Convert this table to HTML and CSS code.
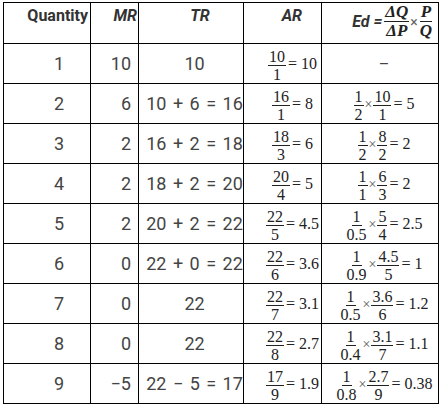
FILE: index.html
```html
<!DOCTYPE html>
<html>
<head>
<meta charset="utf-8">
<link rel="stylesheet" href="styles.css">
</head>
<body>
<table class="tbl">
  <colgroup>
    <col class="c1"><col class="c2"><col class="c3"><col class="c4"><col class="c5">
  </colgroup>
  <tr class="head">
    <th class="h-q">Quantity</th>
    <th class="h-mr">MR</th>
    <th class="h-tr">TR</th>
    <th class="h-ar">AR</th>
    <th class="h-ed"><span class="ed-lbl">Ed =</span><span class="frac big"><span class="num">ΔQ</span><span class="den">ΔP</span></span><span class="times">×</span><span class="frac big"><span class="num">P</span><span class="den">Q</span></span></th>
  </tr>
  <tr>
    <td class="q">1</td><td class="mr">10</td><td class="tr">10</td>
    <td class="ar"><span class="eq"><span class="frac"><span class="num">10</span><span class="den">1</span></span><span class="rhs">= 10</span></span></td>
    <td class="ed"><span class="dash">–</span></td>
  </tr>
  <tr>
    <td class="q">2</td><td class="mr">6</td><td class="tr">10 + 6 = 16</td>
    <td class="ar"><span class="eq"><span class="frac"><span class="num">16</span><span class="den">1</span></span><span class="rhs">= 8</span></span></td>
    <td class="ed"><span class="eq"><span class="frac"><span class="num">1</span><span class="den">2</span></span><span class="x">×</span><span class="frac"><span class="num">10</span><span class="den">1</span></span><span class="rhs">= 5</span></span></td>
  </tr>
  <tr>
    <td class="q">3</td><td class="mr">2</td><td class="tr">16 + 2 = 18</td>
    <td class="ar"><span class="eq"><span class="frac"><span class="num">18</span><span class="den">3</span></span><span class="rhs">= 6</span></span></td>
    <td class="ed"><span class="eq"><span class="frac"><span class="num">1</span><span class="den">2</span></span><span class="x">×</span><span class="frac"><span class="num">8</span><span class="den">2</span></span><span class="rhs">= 2</span></span></td>
  </tr>
  <tr>
    <td class="q">4</td><td class="mr">2</td><td class="tr">18 + 2 = 20</td>
    <td class="ar"><span class="eq"><span class="frac"><span class="num">20</span><span class="den">4</span></span><span class="rhs">= 5</span></span></td>
    <td class="ed"><span class="eq"><span class="frac"><span class="num">1</span><span class="den">1</span></span><span class="x">×</span><span class="frac"><span class="num">6</span><span class="den">3</span></span><span class="rhs">= 2</span></span></td>
  </tr>
  <tr>
    <td class="q">5</td><td class="mr">2</td><td class="tr">20 + 2 = 22</td>
    <td class="ar"><span class="eq"><span class="frac"><span class="num">22</span><span class="den">5</span></span><span class="rhs">= 4.5</span></span></td>
    <td class="ed"><span class="eq"><span class="frac"><span class="num">1</span><span class="den">0.5</span></span><span class="x">×</span><span class="frac"><span class="num">5</span><span class="den">4</span></span><span class="rhs">= 2.5</span></span></td>
  </tr>
  <tr>
    <td class="q">6</td><td class="mr">0</td><td class="tr">22 + 0 = 22</td>
    <td class="ar"><span class="eq"><span class="frac"><span class="num">22</span><span class="den">6</span></span><span class="rhs">= 3.6</span></span></td>
    <td class="ed"><span class="eq"><span class="frac"><span class="num">1</span><span class="den">0.9</span></span><span class="x">×</span><span class="frac"><span class="num">4.5</span><span class="den">5</span></span><span class="rhs">= 1</span></span></td>
  </tr>
  <tr>
    <td class="q">7</td><td class="mr">0</td><td class="tr">22</td>
    <td class="ar"><span class="eq"><span class="frac"><span class="num">22</span><span class="den">7</span></span><span class="rhs">= 3.1</span></span></td>
    <td class="ed"><span class="eq"><span class="frac"><span class="num">1</span><span class="den">0.5</span></span><span class="x">×</span><span class="frac"><span class="num">3.6</span><span class="den">6</span></span><span class="rhs">= 1.2</span></span></td>
  </tr>
  <tr>
    <td class="q">8</td><td class="mr">0</td><td class="tr">22</td>
    <td class="ar"><span class="eq"><span class="frac"><span class="num">22</span><span class="den">8</span></span><span class="rhs">= 2.7</span></span></td>
    <td class="ed"><span class="eq"><span class="frac"><span class="num">1</span><span class="den">0.4</span></span><span class="x">×</span><span class="frac"><span class="num">3.1</span><span class="den">7</span></span><span class="rhs">= 1.1</span></span></td>
  </tr>
  <tr>
    <td class="q">9</td><td class="mr">−5</td><td class="tr">22 − 5 = 17</td>
    <td class="ar"><span class="eq"><span class="frac"><span class="num">17</span><span class="den">9</span></span><span class="rhs">= 1.9</span></span></td>
    <td class="ed"><span class="eq"><span class="frac"><span class="num">1</span><span class="den">0.8</span></span><span class="x">×</span><span class="frac"><span class="num">2.7</span><span class="den">9</span></span><span class="rhs">= 0.38</span></span></td>
  </tr>
</table>
</body>
</html>
```

FILE: styles.css
```css
html, body {
  margin: 0;
  padding: 0;
  background: #fff;
}
body {
  padding: 2px 0 0 3px;
  font-family: Roboto, "Liberation Sans", sans-serif;
}
.tbl {
  border-collapse: collapse;
  table-layout: fixed;
  width: 435px;
}
.c1 { width: 87px; }
.c2 { width: 48px; }
.c3 { width: 105px; }
.c4 { width: 78px; }
.c5 { width: 117px; }

.tbl th, .tbl td {
  border: 1px solid #000;
  padding: 0;
}
.tbl .head th {
  height: 41px;
  vertical-align: top;
  color: #333;
  font-size: 16px;
  font-weight: 700;
  padding-top: 3px;
  box-sizing: border-box;
}
.tbl th.h-q { text-align: right; padding-right: 2px; }
.tbl th.h-mr { text-align: right; font-style: italic; padding-right: 1px; }
.tbl th.h-tr { text-align: center; font-style: italic; padding-left: 18px; }
.tbl th.h-ar { text-align: right; font-style: italic; padding-right: 19px; }
.tbl th.h-ed {
  text-align: right;
  padding-right: 5px;
  padding-top: 1px;
  white-space: nowrap;
}
.ed-lbl {
  font-style: italic;
  vertical-align: middle;
  margin-right: 2px;
}
.tbl td {
  height: 39px;
  color: #444;
  font-size: 18px;
  vertical-align: middle;
}
.tbl td.q { text-align: center; padding-left: 24px; }
.tbl td.mr { text-align: right; padding-right: 7px; }
.tbl td.tr { text-align: center; white-space: nowrap; word-spacing: 2px; padding-left: 7px; }
.tbl td.ar { text-align: center; padding-left: 20px; }
.tbl td.ed { text-align: center; padding-left: 8px; }
.dash { font-size: 16px; }

.eq {
  display: inline-flex;
  align-items: center;
  font-family: "Liberation Serif", "Times New Roman", serif;
  color: #222;
  font-size: 16px;
  white-space: nowrap;
}
.frac {
  display: inline-flex;
  flex-direction: column;
  align-items: center;
  line-height: 15px;
  font-family: "Liberation Serif", "Times New Roman", serif;
}
.frac .num {
  border-bottom: 1px solid #222;
  padding: 0 1px 1px;
}
.frac .den {
  padding: 1px 1px 0;
}
.rhs { margin-left: 2px; padding-bottom: 3px; }
.x { font-size: 14px; margin: 0 1px; color: #555; padding-bottom: 2px; }

.frac.big {
  vertical-align: middle;
  font-weight: 700;
  font-style: italic;
  font-size: 17px;
  line-height: 16px;
  color: #222;
}
.frac.big .num { border-bottom: 1px solid #222; padding: 0 1px 1px; }
.times {
  vertical-align: middle;
  font-weight: 400;
  font-size: 14px;
  color: #666;
  margin: 0 1px;
}
```
